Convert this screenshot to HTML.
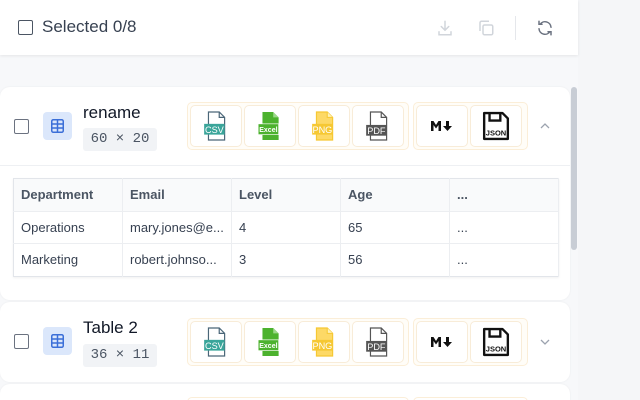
<!DOCTYPE html>
<html><head><meta charset="utf-8">
<style>
*{box-sizing:border-box;margin:0;padding:0}
html,body{width:640px;height:400px;overflow:hidden}
body{background:#f7f8fa;font-family:"Liberation Sans",sans-serif;position:relative}
.side{position:absolute;left:578px;top:0;width:62px;height:400px;background:#f5f6f8}
.hdr{position:absolute;left:0;top:0;width:578px;height:55px;background:#fff;box-shadow:0 1px 3px rgba(0,0,0,.08)}
.cb{position:absolute;width:15px;height:15px;border:1.5px solid #4b5563;border-radius:2px;background:#fff}
.card{position:absolute;left:0;width:570px;background:#fff;border-radius:10px;box-shadow:0 0 2px rgba(0,0,0,.06)}
.ic{position:absolute;left:43px;width:29px;height:28px;background:#dbe7fb;border-radius:4px}
.title{position:absolute;left:83px;font-size:17px;color:#111827;white-space:nowrap}
.badge{position:absolute;left:83px;width:74px;height:23px;background:#f1f3f6;border-radius:3px;font-family:"Liberation Mono",monospace;font-size:14px;color:#4b5563;line-height:23px;text-align:center;white-space:nowrap}
.grp{position:absolute;height:48px;border:1px solid #fbeed8;border-radius:5px;background:#fffdf8}
.btn{position:absolute;top:2px;width:52px;height:42px;border:1px solid #f8ecd8;border-radius:5px;background:#fff;display:flex;align-items:center;justify-content:center}
table{position:absolute;left:13px;top:178px;width:546px;border-collapse:collapse;font-size:13px;color:#374151;border:1px solid #e2e5ea;box-shadow:0 1px 2px rgba(0,0,0,.06)}
td,th{height:32.5px;padding:0 7px;text-align:left;border-right:1px solid #eceef1;border-bottom:1px solid #eceef1;width:109px}
th{background:#f9fafb;color:#4b5563;font-weight:bold}
.scroll{position:absolute;left:571px;top:87px;width:6px;height:163px;background:#c8cdd5;border-radius:3px}
</style></head><body>
<div class="side"></div>
<div class="hdr">
 <div class="cb" style="left:18px;top:20px"></div>
 <div style="position:absolute;left:42px;top:17px;font-size:17px;color:#374151">Selected 0/8</div>
 <svg style="position:absolute;left:436px;top:19px" width="18" height="18" viewBox="0 0 24 24" fill="none" stroke="#d1d5db" stroke-width="2" stroke-linecap="round"><path d="M12 3v12M7 10l5 5 5-5M4 17v4h16v-4"/></svg>
 <svg style="position:absolute;left:477px;top:19px" width="18" height="18" viewBox="0 0 24 24" fill="none" stroke="#d1d5db" stroke-width="2"><rect x="8" y="8" width="13" height="13" rx="2"/><path d="M4 16V5a2 2 0 0 1 2-2h10"/></svg>
 <div style="position:absolute;left:515px;top:16px;width:1px;height:24px;background:#e5e7eb"></div>
 <svg style="position:absolute;left:536px;top:19px" width="18" height="18" viewBox="0 0 24 24" fill="none" stroke="#6b7280" stroke-width="2" stroke-linecap="round"><path d="M20 11A8 8 0 0 0 5.5 7M4 3v4h4M4 13a8 8 0 0 0 14.5 4M20 21v-4h-4"/></svg>
</div>

<div class="card" style="top:87px;height:213px">
 <div style="position:absolute;left:0;top:78px;width:570px;height:1px;background:#eef0f3"></div>
</div>
<div class="scroll"></div>
<div class="card" style="top:302px;height:80px"></div>
<div class="card" style="top:384px;height:30px"></div>

<table>
<tr><th>Department</th><th>Email</th><th>Level</th><th>Age</th><th>...</th></tr>
<tr><td>Operations</td><td>mary.jones@e...</td><td>4</td><td>65</td><td>...</td></tr>
<tr><td style="border-bottom:none">Marketing</td><td style="border-bottom:none">robert.johnso...</td><td style="border-bottom:none">3</td><td style="border-bottom:none">56</td><td style="border-bottom:none">...</td></tr>
</table>

<div class="cb" style="left:14px;top:119px;border-color:#6b7280"></div>
<div class="ic" style="top:112px"><svg style="position:absolute;left:8px;top:7px" width="13" height="14" viewBox="0 0 13 14"><rect x="0.75" y="0.75" width="11.5" height="12.5" rx="1.5" fill="none" stroke="#3b6fd8" stroke-width="1.5"/><path d="M1 5h11M1 9h11M6.5 1v12" stroke="#3b6fd8" stroke-width="1.5"/></svg></div>
<div class="title" style="top:103px">rename</div>
<div class="badge" style="top:128px">60 × 20</div>
<div class="cb" style="left:14px;top:334px;border-color:#6b7280"></div>
<div class="ic" style="top:327px"><svg style="position:absolute;left:8px;top:7px" width="13" height="14" viewBox="0 0 13 14"><rect x="0.75" y="0.75" width="11.5" height="12.5" rx="1.5" fill="none" stroke="#3b6fd8" stroke-width="1.5"/><path d="M1 5h11M1 9h11M6.5 1v12" stroke="#3b6fd8" stroke-width="1.5"/></svg></div>
<div class="title" style="top:318px">Table 2</div>
<div class="badge" style="top:344px">36 × 11</div>

<div style="position:absolute;left:0;top:102px">
 <div class="grp" style="left:187px;width:222px">
  <div class="btn" style="left:2px"><svg width="28" height="32" viewBox="0 0 26 28"><path d="M6 1h10l5 5v21H6z" fill="#fff" stroke="#4a6678" stroke-width="1.1"/><path d="M16 1v5h5" fill="none" stroke="#4a6678" stroke-width="1.1"/><rect x="2" y="12" width="19" height="10" fill="#3aa59a"/><text x="11.5" y="20.5" font-size="8.5" fill="#fff" text-anchor="middle" font-family="Liberation Sans">CSV</text></svg></div>
  <div class="btn" style="left:56px"><svg width="28" height="32" viewBox="0 0 26 28"><path d="M6 1h10l5 5v21H6z" fill="#4cb22e"/><path d="M16 1v5h5" fill="#9cd88a"/><rect x="2" y="12" width="19" height="10" fill="#4cb22e" stroke="#fff" stroke-width=".6"/><text x="11.5" y="19.8" font-size="6.5" fill="#fff" text-anchor="middle" font-family="Liberation Sans" font-weight="bold">Excel</text></svg></div>
  <div class="btn" style="left:110px"><svg width="28" height="32" viewBox="0 0 26 28"><path d="M6 1h10l5 5v21H6z" fill="#fdd966" stroke="#f6c833" stroke-width="1.1"/><path d="M16 1v5h5" fill="#fff1b8" stroke="#f6c833"/><rect x="2" y="12" width="19" height="10" fill="#f6c833"/><text x="11.5" y="20.5" font-size="8.5" fill="#fff" text-anchor="middle" font-family="Liberation Sans">PNG</text></svg></div>
  <div class="btn" style="left:164px"><svg width="28" height="32" viewBox="0 0 26 28"><path d="M6 1h10l5 5v21H6z" fill="#fff" stroke="#555" stroke-width="1.1"/><path d="M16 1v5h5" fill="none" stroke="#555" stroke-width="1.1"/><rect x="2" y="13" width="19" height="10" fill="#555"/><text x="11.5" y="21.5" font-size="8.5" fill="#fff" text-anchor="middle" font-family="Liberation Sans">PDF</text></svg></div>
 </div>
 <div class="grp" style="left:413px;width:115px">
  <div class="btn" style="left:2px"><svg width="24" height="12" viewBox="0 0 24 12"><path d="M1 11V1h2.5L6 5l2.5-4H11v10H8.5V5L6 8.5 3.5 5v6z" fill="#111"/><path d="M16 1h3v5h3l-4.5 5L13 6h3z" fill="#111"/></svg></div>
  <div class="btn" style="left:56px"><svg width="28" height="32" viewBox="0 0 26 28"><path d="M2 2h17l5 5v19H2z" fill="#fff" stroke="#111" stroke-width="2.2" stroke-linejoin="round"/><path d="M7 2v7h10V2" fill="none" stroke="#111" stroke-width="2.2"/><text x="13" y="23" font-size="7" fill="#111" text-anchor="middle" font-family="Liberation Sans" font-weight="bold">JSON</text></svg></div>
 </div>
 <svg style="position:absolute;left:539px;top:20px" width="12" height="8" viewBox="0 0 12 8" fill="none" stroke="#9ca3af" stroke-width="1.3"><path d="M2 6l4-4 4 4"/></svg>
</div>
<div style="position:absolute;left:0;top:318px">
 <div class="grp" style="left:187px;width:222px">
  <div class="btn" style="left:2px"><svg width="28" height="32" viewBox="0 0 26 28"><path d="M6 1h10l5 5v21H6z" fill="#fff" stroke="#4a6678" stroke-width="1.1"/><path d="M16 1v5h5" fill="none" stroke="#4a6678" stroke-width="1.1"/><rect x="2" y="12" width="19" height="10" fill="#3aa59a"/><text x="11.5" y="20.5" font-size="8.5" fill="#fff" text-anchor="middle" font-family="Liberation Sans">CSV</text></svg></div>
  <div class="btn" style="left:56px"><svg width="28" height="32" viewBox="0 0 26 28"><path d="M6 1h10l5 5v21H6z" fill="#4cb22e"/><path d="M16 1v5h5" fill="#9cd88a"/><rect x="2" y="12" width="19" height="10" fill="#4cb22e" stroke="#fff" stroke-width=".6"/><text x="11.5" y="19.8" font-size="6.5" fill="#fff" text-anchor="middle" font-family="Liberation Sans" font-weight="bold">Excel</text></svg></div>
  <div class="btn" style="left:110px"><svg width="28" height="32" viewBox="0 0 26 28"><path d="M6 1h10l5 5v21H6z" fill="#fdd966" stroke="#f6c833" stroke-width="1.1"/><path d="M16 1v5h5" fill="#fff1b8" stroke="#f6c833"/><rect x="2" y="12" width="19" height="10" fill="#f6c833"/><text x="11.5" y="20.5" font-size="8.5" fill="#fff" text-anchor="middle" font-family="Liberation Sans">PNG</text></svg></div>
  <div class="btn" style="left:164px"><svg width="28" height="32" viewBox="0 0 26 28"><path d="M6 1h10l5 5v21H6z" fill="#fff" stroke="#555" stroke-width="1.1"/><path d="M16 1v5h5" fill="none" stroke="#555" stroke-width="1.1"/><rect x="2" y="13" width="19" height="10" fill="#555"/><text x="11.5" y="21.5" font-size="8.5" fill="#fff" text-anchor="middle" font-family="Liberation Sans">PDF</text></svg></div>
 </div>
 <div class="grp" style="left:413px;width:115px">
  <div class="btn" style="left:2px"><svg width="24" height="12" viewBox="0 0 24 12"><path d="M1 11V1h2.5L6 5l2.5-4H11v10H8.5V5L6 8.5 3.5 5v6z" fill="#111"/><path d="M16 1h3v5h3l-4.5 5L13 6h3z" fill="#111"/></svg></div>
  <div class="btn" style="left:56px"><svg width="28" height="32" viewBox="0 0 26 28"><path d="M2 2h17l5 5v19H2z" fill="#fff" stroke="#111" stroke-width="2.2" stroke-linejoin="round"/><path d="M7 2v7h10V2" fill="none" stroke="#111" stroke-width="2.2"/><text x="13" y="23" font-size="7" fill="#111" text-anchor="middle" font-family="Liberation Sans" font-weight="bold">JSON</text></svg></div>
 </div>
 <svg style="position:absolute;left:539px;top:20px" width="12" height="8" viewBox="0 0 12 8" fill="none" stroke="#9ca3af" stroke-width="1.3"><path d="M2 2l4 4 4-4"/></svg>
</div>
<div style="position:absolute;left:187px;top:397px;width:222px;height:10px;border:1px solid #fbeed8;border-radius:5px"></div>
<div style="position:absolute;left:413px;top:397px;width:115px;height:10px;border:1px solid #fbeed8;border-radius:5px"></div>
</body></html>
